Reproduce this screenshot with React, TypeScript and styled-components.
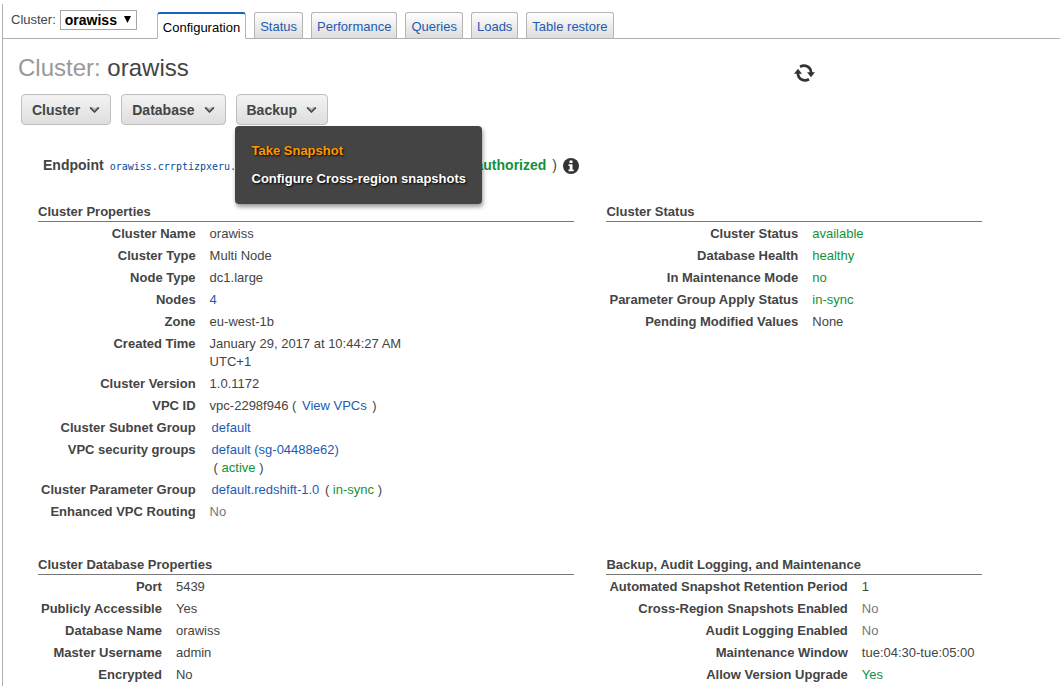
import React, { useState } from 'react';
import styled, { createGlobalStyle } from 'styled-components';

const GlobalStyle = createGlobalStyle`
  *, *::before, *::after { box-sizing: border-box; }
  body {
    margin: 0;
    background: #fff;
    color: #444;
    font: 13px/18px "Liberation Sans", Arial, sans-serif;
  }
  a { color: #1c5bb5; text-decoration: none; }
`;

const Panel = styled.div`
  margin: 4px 0 0 2px;
  min-height: calc(100vh - 4px);
  border-left: 1px solid #b0b0b0;
`;

const TopBar = styled.header`
  display: flex;
  align-items: flex-end;
  height: 35px;
  padding-left: 8px;
  border-bottom: 1px solid #b0b0b0;
`;

const Picker = styled.div`
  display: flex;
  align-items: center;
  gap: 4px;
  margin-right: 20px;
  padding-bottom: 8px;
`;

const SelectBox = styled.div`
  position: relative;
`;

const Select = styled.select`
  display: block;
  appearance: none;
  width: 77px;
  height: 20px;
  padding: 0 0 0 4px;
  border: 1px solid #a6a6a6;
  border-radius: 0;
  background: #fff;
  color: #000;
  font: bold 14px/18px "Liberation Sans", Arial, sans-serif;
`;

const SelectArrow = styled.svg`
  position: absolute;
  right: 6px;
  top: 6px;
  pointer-events: none;
`;

const Tabs = styled.nav`
  display: flex;
  align-items: flex-end;
  gap: 8px;
  margin-bottom: -1px;
`;

const Tab = styled.a<{ $active?: boolean }>`
  height: 27px;
  padding: 5px 5px 0;
  border: 1px solid #b5b5b5;
  border-top: ${(p) => (p.$active ? '2px solid #1763be' : '1px solid #b5b5b5')};
  border-bottom-color: ${(p) => (p.$active ? '#fff' : '#b0b0b0')};
  border-radius: 3px 3px 0 0;
  background: ${(p) => (p.$active ? '#fff' : 'linear-gradient(#fefefe, #dedddb)')};
  && { color: ${(p) => (p.$active ? '#000' : '#1c5bb5')}; }
`;

const TitleRow = styled.div`
  display: flex;
  align-items: center;
  justify-content: space-between;
  padding: 14px 245px 0 15px;
`;

const Title = styled.h1`
  margin: 0;
  font-size: 24px;
  line-height: 30px;
  font-weight: normal;
  color: #444;
`;

const Muted = styled.span`
  color: #999;
`;

const IconButton = styled.button`
  display: flex;
  margin: 9px 0 0;
  padding: 0;
  border: 0;
  background: none;
`;

const Toolbar = styled.div`
  display: flex;
  gap: 10px;
  padding: 11px 18px 0;
`;

const MenuAnchor = styled.div`
  position: relative;
`;

const MenuButton = styled.button`
  display: flex;
  align-items: center;
  gap: 9px;
  height: 31px;
  padding: 0 10px;
  border: 1px solid #bfbfbf;
  border-radius: 4px;
  background: linear-gradient(#f3f3f3, #dedede);
  color: #444;
  font: bold 14px/18px "Liberation Sans", Arial, sans-serif;
`;

const Menu = styled.div`
  position: absolute;
  top: 32px;
  left: -1px;
  z-index: 1;
  padding: 11px 16px 11px 17px;
  border-radius: 4px;
  background: #444;
  box-shadow: 1px 3px 4px rgba(0, 0, 0, 0.4);
`;

const MenuItem = styled.a<{ $hot?: boolean }>`
  display: block;
  line-height: 28px;
  font-weight: bold;
  white-space: nowrap;
  text-shadow: 1px 1px 2px #000;
  && { color: ${(p) => (p.$hot ? '#ff9900' : '#fff')}; }
`;

const Endpoint = styled.div`
  display: flex;
  align-items: baseline;
  gap: 6px;
  padding: 31px 0 0 40px;
  font-size: 14px;
  white-space: nowrap;
`;

const Address = styled.a`
  font: 10px/18px "DejaVu Sans Mono", monospace;
  && { color: #0a4b9e; }
`;

const Good = styled.span`
  color: #139138;
`;

const Grey = styled.span`
  color: #777;
`;

const InfoIcon = styled.svg`
  align-self: center;
`;

const Sections = styled.main`
  display: grid;
  grid-template-columns: minmax(0, 10fr) minmax(0, 7fr);
  gap: 33px 32px;
  padding: 26px 78px 0 35px;
`;

const Heading = styled.h2`
  margin: 0;
  border-bottom: 1px solid #777;
  font-size: 13px;
  line-height: 19px;
`;

const Table = styled.table`
  border-collapse: collapse;
`;

const Label = styled.th`
  padding: 3px 0 1px 3px;
  text-align: right;
  vertical-align: top;
  white-space: nowrap;
`;

const Value = styled.td`
  max-width: 220px;
  padding: 3px 0 1px 14px;
  vertical-align: top;
`;

const ResourceLink = styled.a`
  padding: 0 2px;
`;

const SubLine = styled.div`
  padding-left: 4px;
`;

const Chevron = () => (
  <svg width="11" height="8" viewBox="0 0 11 8" aria-hidden="true">
    <path d="M1 1h2.5l2 2 2-2H10v1.5L5.500 7 1 2.500z" fill="#aaa" />
    <path d="M1 1.500l4.500 4.500L10 1.500" fill="none" stroke="#444" strokeWidth="1.300" />
  </svg>
);

const Refresh = () => (
  <svg width="21" height="18" viewBox="0 0 21 18" aria-hidden="true">
    <g fill="none" stroke="#333" strokeWidth="2.700">
      <path d="M6 2.700C11 .2 17 2.500 17.100 9" />
      <path d="M15 15.300C10 17.800 4 15.500 3.900 9" />
    </g>
    <path d="M13 8.300h8l-4 5zM0 9.700h8l-4-5z" fill="#333" />
  </svg>
);

type Row = [string, React.ReactNode];

const properties: Row[] = [
  ['Cluster Name', 'orawiss'],
  ['Cluster Type', 'Multi Node'],
  ['Node Type', 'dc1.large'],
  ['Nodes', <a href="#nodes">4</a>],
  ['Zone', 'eu-west-1b'],
  ['Created Time', 'January 29, 2017 at 10:44:27 AM UTC+1'],
  ['Cluster Version', '1.0.1172'],
  ['VPC ID', <>vpc-2298f946 ( <ResourceLink href="#vpcs">View VPCs</ResourceLink> )</>],
  ['Cluster Subnet Group', <ResourceLink href="#subnet">default</ResourceLink>],
  [
    'VPC security groups',
    <>
      <ResourceLink href="#groups">default (sg-04488e62)</ResourceLink>
      <SubLine>( <Good>active</Good> )</SubLine>
    </>,
  ],
  [
    'Cluster Parameter Group',
    <><ResourceLink href="#params">default.redshift-1.0</ResourceLink> ( <Good>in-sync</Good> )</>,
  ],
  ['Enhanced VPC Routing', <Grey>No</Grey>],
];

const status: Row[] = [
  ['Cluster Status', <Good>available</Good>],
  ['Database Health', <Good>healthy</Good>],
  ['In Maintenance Mode', <Good>no</Good>],
  ['Parameter Group Apply Status', <Good>in-sync</Good>],
  ['Pending Modified Values', 'None'],
];

const database: Row[] = [
  ['Port', '5439'],
  ['Publicly Accessible', 'Yes'],
  ['Database Name', 'orawiss'],
  ['Master Username', 'admin'],
  ['Encrypted', 'No'],
];

const backup: Row[] = [
  ['Automated Snapshot Retention Period', '1'],
  ['Cross-Region Snapshots Enabled', <Grey>No</Grey>],
  ['Audit Logging Enabled', <Grey>No</Grey>],
  ['Maintenance Window', 'tue:04:30-tue:05:00'],
  ['Allow Version Upgrade', <Good>Yes</Good>],
];

const Section = ({ title, rows }: { title: string; rows: Row[] }) => (
  <section>
    <Heading>{title}</Heading>
    <Table>
      <tbody>
        {rows.map(([label, value]) => (
          <tr key={label}>
            <Label scope="row">{label}</Label>
            <Value>{value}</Value>
          </tr>
        ))}
      </tbody>
    </Table>
  </section>
);

const tabs = ['Configuration', 'Status', 'Performance', 'Queries', 'Loads', 'Table restore'];

export default function App() {
  const [open, setOpen] = useState(true);
  return (
    <>
      <GlobalStyle />
      <Panel>
        <TopBar>
          <Picker>
            <label htmlFor="cluster">Cluster:</label>
            <SelectBox>
              <Select id="cluster">
                <option>orawiss</option>
              </Select>
              <SelectArrow width="7" height="7" viewBox="0 0 7 7" aria-hidden="true">
                <path d="M0 0h7L3.500 7z" />
              </SelectArrow>
            </SelectBox>
          </Picker>
          <Tabs>
            {tabs.map((tab, i) => (
              <Tab key={tab} href={`#${i}`} $active={i === 0}>{tab}</Tab>
            ))}
          </Tabs>
        </TopBar>
        <TitleRow>
          <Title><Muted>Cluster:</Muted> orawiss</Title>
          <IconButton aria-label="Refresh"><Refresh /></IconButton>
        </TitleRow>
        <Toolbar>
          <MenuButton>Cluster<Chevron /></MenuButton>
          <MenuButton>Database<Chevron /></MenuButton>
          <MenuAnchor>
            <MenuButton aria-expanded={open} onClick={() => setOpen(!open)}>Backup<Chevron /></MenuButton>
            {open && (
              <Menu>
                <MenuItem href="#snapshot" $hot>Take Snapshot</MenuItem>
                <MenuItem href="#cross-region">Configure Cross-region snapshots</MenuItem>
              </Menu>
            )}
          </MenuAnchor>
        </Toolbar>
        <Endpoint>
          <strong>Endpoint</strong>
          <Address href="#endpoint">orawiss.crrptizpxeru.eu-west-1.redshift.amazonaws.com:5439</Address>
          <span>(</span>
          <Good as="strong">authorized</Good>
          <span>)</span>
          <InfoIcon width="16" height="16" viewBox="0 0 16 16" aria-hidden="true">
            <circle cx="8" cy="8" r="8" fill="#333" />
            <path d="M6.500 2.500h3v2.500h-3zM5.500 6.300h4v5.200h1.200v1.700H5.500v-1.700h1.200V8H5.500z" fill="#fff" />
          </InfoIcon>
        </Endpoint>
        <Sections>
          <Section title="Cluster Properties" rows={properties} />
          <Section title="Cluster Status" rows={status} />
          <Section title="Cluster Database Properties" rows={database} />
          <Section title="Backup, Audit Logging, and Maintenance" rows={backup} />
        </Sections>
      </Panel>
    </>
  );
}
